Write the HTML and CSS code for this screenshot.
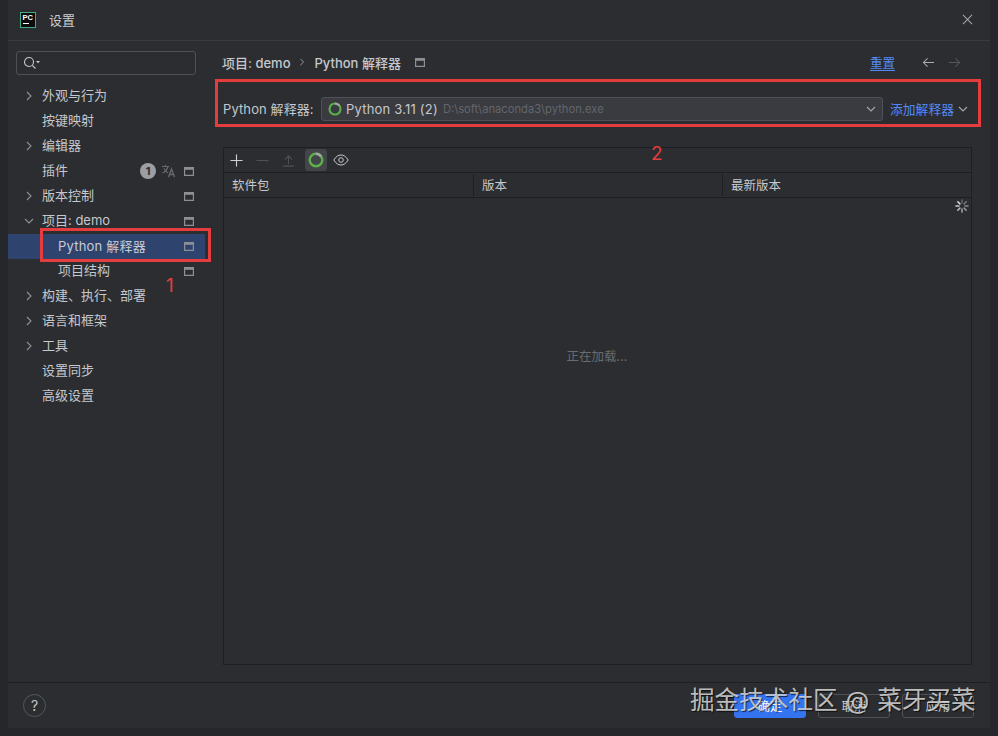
FILE: index.html
```html
<!DOCTYPE html>
<html lang="zh">
<head>
<meta charset="utf-8">
<title>设置</title>
<link rel="stylesheet" href="styles.css">
</head>
<body>
<svg class="defs" width="0" height="0">
  <symbol id="mod" viewBox="0 0 10 9"><path d="M.6.6h8.800v7.800H.6z" fill="none" stroke="currentColor" stroke-width="1.200"/><path d="M1 1h8v1.800H1z" fill="currentColor"/></symbol>
  <symbol id="right" viewBox="0 0 10 10"><path d="M3 1l4 4-4 4" fill="none" stroke="currentColor" stroke-width="1.100"/></symbol>
  <symbol id="down" viewBox="0 0 10 10"><path d="M1 3l4 4 4-4" fill="none" stroke="currentColor" stroke-width="1.100"/></symbol>
  <symbol id="ring" viewBox="0 0 16 16"><circle cx="8" cy="8" r="6.300" fill="none" stroke="#5cb04a" stroke-width="2.400"/><path d="M8 1.700a6.300 6.300 0 0 1 5 2.500" fill="none" stroke="#a4a8a6" stroke-width="2.400"/></symbol>
</svg>
<main class="window">
  <header class="titlebar">
    <div class="logo"><span class="logo-text">PC</span><span class="logo-bar"></span></div>
    <span class="title">设置</span>
    <svg class="close" viewBox="0 0 12 12"><path d="M1 1l10 10M11 1L1 11" stroke="currentColor" stroke-width="1.100" fill="none"/></svg>
  </header>
  <div class="content">
    <aside class="sidebar">
      <div class="search">
        <svg class="search-icon" viewBox="0 0 18 14"><circle cx="6" cy="6" r="4.500" fill="none" stroke="#c5c8cc" stroke-width="1.100"/><path d="M9.300 9.300l3.200 3.200" stroke="#c5c8cc" stroke-width="1.100"/><path d="M13 5h4l-2 2.200z" fill="#c5c8cc"/></svg>
      </div>
      <ul class="tree">
        <li class="row"><svg class="arrow"><use href="#right"/></svg><span>外观与行为</span></li>
        <li class="row"><span class="noarrow"></span><span>按键映射</span></li>
        <li class="row"><svg class="arrow"><use href="#right"/></svg><span>编辑器</span></li>
        <li class="row"><span class="noarrow"></span><span>插件</span><span class="badge">1</span><svg class="lang" viewBox="0 0 16 14"><path d="M1 2.500h7M4.500 1v1.500M7 2.500C6 6 4 8 1.500 9M3 4.500c1 2 2.500 3.500 4 4.500" fill="none" stroke="#66696e" stroke-width="1.200"/><path d="M7.500 13l3-8 3 8M8.600 10.500h3.800" fill="none" stroke="#66696e" stroke-width="1.400"/></svg><svg class="mod"><use href="#mod"/></svg></li>
        <li class="row"><svg class="arrow"><use href="#right"/></svg><span>版本控制</span><svg class="mod end"><use href="#mod"/></svg></li>
        <li class="row"><svg class="arrow"><use href="#down"/></svg><span>项目: demo</span><svg class="mod end"><use href="#mod"/></svg></li>
        <li class="row child selected"><span>Python 解释器</span><svg class="mod end"><use href="#mod"/></svg></li>
        <li class="row child"><span>项目结构</span><svg class="mod end"><use href="#mod"/></svg></li>
        <li class="row"><svg class="arrow"><use href="#right"/></svg><span>构建、执行、部署</span></li>
        <li class="row"><svg class="arrow"><use href="#right"/></svg><span>语言和框架</span></li>
        <li class="row"><svg class="arrow"><use href="#right"/></svg><span>工具</span></li>
        <li class="row"><span class="noarrow"></span><span>设置同步</span></li>
        <li class="row"><span class="noarrow"></span><span>高级设置</span></li>
      </ul>
    </aside>
    <section class="panel">
      <div class="crumbs">
        <span>项目: demo</span>
        <svg class="crumb-sep"><use href="#right"/></svg>
        <span>Python 解释器</span>
        <svg class="mod crumb-mod"><use href="#mod"/></svg>
        <a class="reset">重置</a>
        <svg class="nav" viewBox="0 0 14 12"><path d="M13 6H1.500M6 1.500L1.500 6 6 10.500" fill="none" stroke="#a8abb0" stroke-width="1.100"/></svg>
        <svg class="nav nav-off" viewBox="0 0 14 12"><path d="M1 6h11.500M8 1.500L12.500 6 8 10.500" fill="none" stroke="#55585c" stroke-width="1.100"/></svg>
      </div>
      <div class="interp">
        <span class="interp-label">Python 解释器:</span>
        <div class="combo">
          <svg class="ring"><use href="#ring"/></svg>
          <span class="combo-name">Python 3.11 (2)</span>
          <span class="combo-path">D:\soft\anaconda3\python.exe</span>
          <svg class="combo-arrow"><use href="#down"/></svg>
        </div>
        <a class="add">添加解释器</a>
        <svg class="add-arrow"><use href="#down"/></svg>
      </div>
      <div class="table">
        <div class="toolbar">
          <svg class="tool" viewBox="0 0 14 14"><path d="M7 .5v13M.5 7h13" stroke="#ced0d6" stroke-width="1.200"/></svg>
          <svg class="tool" viewBox="0 0 14 14"><path d="M.5 7h13" stroke="#4e5155" stroke-width="1.200"/></svg>
          <svg class="tool" viewBox="0 0 14 14"><path d="M7 11V2M3 6l4-4 4 4M1 13h12" fill="none" stroke="#4e5155" stroke-width="1.200"/></svg>
          <span class="tool-on"><svg class="ring ring-big"><use href="#ring"/></svg></span>
          <svg class="eye" viewBox="0 0 16 12"><path d="M.8 6C3 2.400 5.400 1 8 1s5 1.400 7.200 5C13 9.600 10.600 11 8 11S3 9.600.8 6z" fill="none" stroke="#c5c8cc" stroke-width="1"/><circle cx="8" cy="6" r="2.300" fill="none" stroke="#c5c8cc" stroke-width="1"/></svg>
        </div>
        <div class="thead">
          <div class="th th-a">软件包</div>
          <div class="th th-b">版本</div>
          <div class="th th-c">最新版本</div>
        </div>
        <div class="tbody">
          <svg class="spinner" viewBox="0 0 14 14"><g stroke-width="1.500" stroke-linecap="round"><path d="M7 1v3" stroke="#666"/><path d="M11.200 2.800L9.100 4.900" stroke="#777"/><path d="M13 7h-3" stroke="#888"/><path d="M11.200 11.200L9.100 9.100" stroke="#999"/><path d="M7 13v-3" stroke="#aaa"/><path d="M2.800 11.200l2.100-2.100" stroke="#bbb"/><path d="M1 7h3" stroke="#ccc"/><path d="M2.800 2.800l2.100 2.100" stroke="#ddd"/></g></svg>
          <span class="loading">正在加载...</span>
        </div>
      </div>
    </section>
  </div>
  <footer class="footer">
    <span class="help">?</span>
    <div class="buttons">
      <button class="btn primary">确定</button>
      <button class="btn">取消</button>
      <button class="btn">应用</button>
    </div>
  </footer>
  <div class="mark mark-1"></div>
  <div class="mark mark-2"></div>
  <span class="num num-1">1</span>
  <span class="num num-2">2</span>
  <div class="watermark">掘金技术社区 @ 菜牙买菜</div>
</main>
</body>
</html>
```
FILE: styles.css
```css
* { box-sizing: border-box; }
html, body { margin: 0; height: 100%; }
body {
  background: #26272a;
  font-family: Inter, "Noto Sans CJK SC", sans-serif;
  font-size: 13px;
  color: #c5c8ce;
  overflow: hidden;
}
.defs { position: absolute; }
.window {
  position: relative;
  width: 982px;
  height: 728px;
  margin-left: 8px;
  background: #2b2d30;
  display: flex;
  flex-direction: column;
}
.titlebar {
  height: 41px;
  flex: none;
  border-bottom: 1px solid #393b3f;
  display: flex;
  align-items: center;
  padding: 0 0 1px 12px;
}
.logo {
  width: 16px;
  height: 16px;
  background: #0c0c0c;
  border: 1px solid #3fae85;
  margin-right: 13px;
  color: #fff;
}
.logo-text {
  display: block;
  font: bold 7.500px/9px "Liberation Sans", sans-serif;
  margin-left: 1.500px;
}
.logo-bar {
  display: block;
  width: 6px;
  height: 1px;
  background: #fff;
  margin: 1px 0 0 1.500px;
}
.title { font-size: 13px; color: #c9ccd1; }
.close { width: 11px; height: 11px; margin-left: auto; margin-right: 17px; color: #a5a8ad; }
.content { display: flex; flex: none; height: 641px; }
.sidebar { width: 197px; flex: none; padding-top: 10px; }
.search {
  margin-left: 8px;
  width: 180px;
  height: 24px;
  border: 1px solid #4e5157;
  border-radius: 3px;
  display: flex;
  align-items: center;
  padding-left: 6px;
}
.search-icon { width: 18px; height: 14px; }
.tree { list-style: none; margin: 9px 0 0; padding: 0; }
.row {
  height: 25px;
  display: flex;
  align-items: center;
  padding-left: 16px;
  padding-right: 11px;
  color: #c5c8ce;
}
.row > span { position: relative; top: -2px; }
.row > .badge { top: -1px; }
.arrow { width: 10px; height: 10px; margin: -1px 8px 1px 0; color: #8f9296; }
.noarrow { width: 10px; margin-right: 8px; }
.child { padding-left: 50px; }
.selected { background: #2e436e; color: #c7ccd6; }
.row.selected > span { letter-spacing: .2px; top: -1px; }
.mod { width: 10px; height: 9px; color: #8c8f94; flex: none; }
.row > .mod { margin-top: -1px; }
.end { margin-left: auto; }
.badge {
  width: 16px;
  height: 16px;
  border-radius: 50%;
  background: #9b9ea3;
  color: #2b2d30;
  font-size: 11px;
  font-weight: bold;
  text-align: center;
  line-height: 16px;
  margin-left: auto;
}
.lang { width: 16px; height: 14px; margin: -1px 7px 0 5px; }
.panel { flex: 1; min-width: 0; padding: 0 18px; display: flex; flex-direction: column; }
.crumbs {
  height: 24px;
  flex: none;
  margin: 9px 0 0 -1px;
  display: flex;
  align-items: center;
  font-size: 13px;
  font-weight: 500;
  color: #c5c8ce;
}
.crumb-sep { width: 8px; height: 8px; margin: 0 8px 0 8px; color: #a5a8ad; }
.crumb-mod { margin-left: 14px; }
.reset { margin-left: auto; color: #548af7; text-decoration: underline; text-underline-offset: 2px; font-size: 12.500px; font-weight: 400; }
.nav { width: 13px; height: 11px; margin-left: 27px; }
.nav-off { margin-left: 13px; margin-right: 11px; }
.interp {
  display: flex;
  align-items: center;
  flex: none;
  height: 24px;
  margin-top: 23px;
}
.interp-label { position: relative; top: -1px; width: 98px; flex: none; font-size: 13px; letter-spacing: .1px; white-space: nowrap; }
.combo {
  width: 562px;
  height: 24px;
  flex: none;
  background: #393b40;
  border: 1px solid #4e5157;
  border-radius: 3px;
  display: flex;
  align-items: center;
  padding-left: 6px;
}
.ring { width: 14px; height: 14px; flex: none; }
.ring-big { width: 16px; height: 16px; }
.combo-name { margin-left: 4px; color: #c5c8ce; font-size: 13px; letter-spacing: .2px; }
.combo-path { margin-left: 5px; color: #63666b; font-size: 11.200px; }
.combo-arrow { width: 10px; height: 10px; margin-left: auto; margin-right: 6px; color: #a5a8ad; }
.add { position: relative; top: -1px; margin-left: 7px; color: #548af7; font-size: 12.800px; white-space: nowrap; }
.add-arrow { width: 10px; height: 10px; margin-left: 4px; color: #a5a8ad; flex: none; }
.table {
  margin-top: 26px;
  width: 749px;
  height: 518px;
  flex: none;
  border: 1px solid #1e1f22;
  display: flex;
  flex-direction: column;
}
.toolbar {
  height: 25px;
  flex: none;
  border-bottom: 1px solid #1e1f22;
  display: flex;
  align-items: center;
  padding-left: 6px;
}
.tool { width: 13px; height: 13px; margin-right: 13px; }
.tool-on {
  width: 22px;
  height: 22px;
  background: #43454a;
  border-radius: 3px;
  display: flex;
  align-items: center;
  justify-content: center;
  margin-left: -3px;
}
.eye { width: 16px; height: 12px; margin-left: 6px; }
.thead {
  height: 25px;
  flex: none;
  display: flex;
  border-bottom: 1px solid #1e1f22;
}
.th { padding-left: 8px; font-size: 12.500px; color: #c5c8ce; border-right: 1px solid #1e1f22; margin: 1px 0; line-height: 24px; }
.th-a { width: 250px; }
.th-b { width: 249px; }
.th-c { flex: 1; border-right: 0; }
.tbody { flex: 1; position: relative; display: flex; align-items: center; justify-content: center; }
.spinner { position: absolute; right: 2px; top: 1px; width: 14px; height: 14px; }
.loading { color: #686b70; font-size: 12.500px; margin-top: -152px; margin-left: -1px; }
.footer {
  height: 46px;
  flex: none;
  border-top: 1px solid #1e1f22;
  display: flex;
  align-items: center;
  padding: 0 16px 0 15px;
}
.help {
  width: 23px;
  height: 23px;
  border: 1px solid #55585c;
  border-radius: 50%;
  text-align: center;
  line-height: 21px;
  font-size: 14px;
  color: #c5c8ce;
}
.buttons { margin-left: auto; display: flex; gap: 12px; }
.btn {
  width: 72px;
  height: 24px;
  background: transparent;
  border: 1px solid #4e5157;
  border-radius: 3px;
  color: #c5c8ce;
  font: 12.500px Inter, "Noto Sans CJK SC", sans-serif;
  padding: 0;
}
.primary { background: #3574f0; border-color: #3574f0; color: #fff; }
.mark { position: absolute; border: 3px solid #e53d3d; pointer-events: none; }
.mark-1 { left: 32px; top: 228px; width: 171px; height: 34px; }
.mark-2 { left: 207px; top: 79px; width: 766px; height: 48px; }
.num { position: absolute; color: #e53d3d; font-size: 19px; line-height: 20px; }
.num-1 { left: 158px; top: 276px; }
.num-2 { left: 643px; top: 144px; }
.watermark {
  position: absolute;
  left: 682px;
  top: 684px;
  font-size: 24.600px;
  line-height: 32px;
  word-spacing: 1px;
  white-space: nowrap;
  color: rgba(225, 225, 225, .82);
  text-shadow: 1px 1px 1px rgba(0, 0, 0, .7);
}
```
